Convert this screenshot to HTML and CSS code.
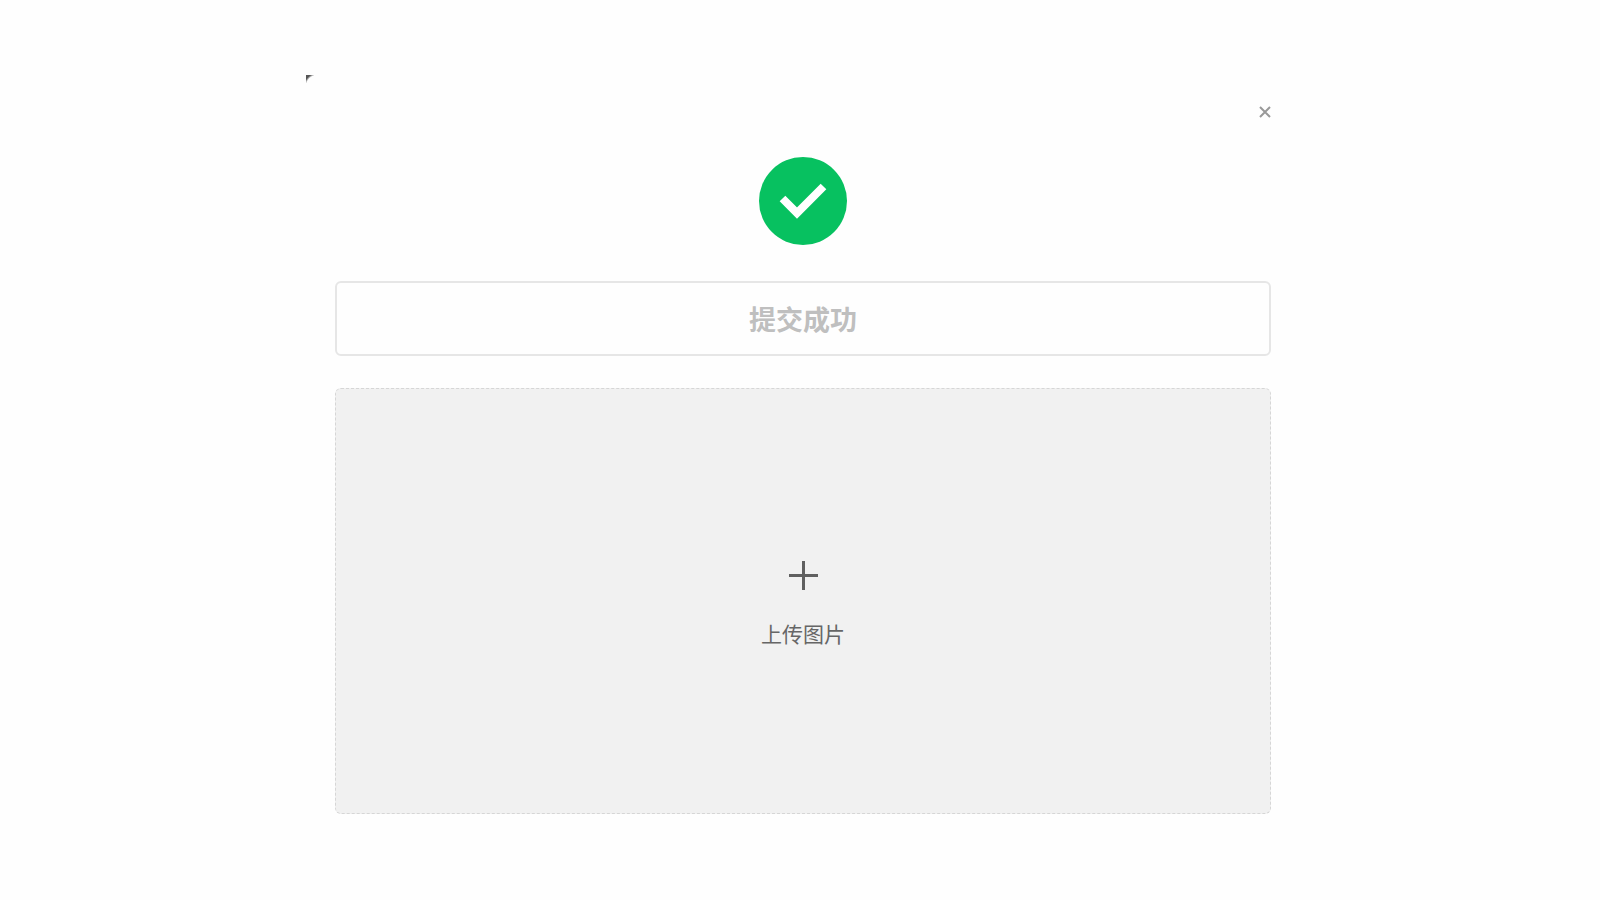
FILE: index.html
```html
<!DOCTYPE html>
<html lang="zh-CN">
<head>
    <meta charset="UTF-8">
    <meta name="viewport" content="width=device-width, initial-scale=1.0">
    <title>提交成功</title>
    <link rel="stylesheet" href="styles.css">
</head>
<body>
    <div class="backdrop">
        <div class="dialog">
            <div class="dialog-header">
                <button class="close-btn" type="button" aria-label="关闭">
                    <svg viewBox="0 0 12 12" width="12" height="12">
                        <path d="M1 1l10 10M11 1L1 11" />
                    </svg>
                </button>
            </div>

            <svg class="success-icon" viewBox="0 0 88 88">
                <circle cx="44" cy="44" r="44" />
                <path d="M23.5 41.5L38 56L64.5 29.5" />
            </svg>

            <button class="submit-btn" type="button" disabled>提交成功</button>

            <label class="upload">
                <input class="upload-input" type="file" accept="image/*">
                <svg class="upload-icon" viewBox="0 0 29 29">
                    <path d="M14.5 0v29M0 14.5h29" />
                </svg>
                <span class="upload-text">上传图片</span>
            </label>
        </div>
    </div>
</body>
</html>
```

FILE: styles.css
```css
:root {
    --success: #07c160;
    --border: #e6e6e6;
    --dash: #d6d6d6;
    --muted: #bfbfbf;
    --text: #666;
}

* {
    margin: 0;
    padding: 0;
    box-sizing: border-box;
    font-family: "Noto Sans CJK SC", sans-serif;
}

body {
    min-height: 100vh;
    background: #fefefe;
    color: var(--text);
}

.backdrop {
    display: flex;
    justify-content: center;
    padding: 75px 20px 0;
}

.dialog {
    display: flex;
    flex-direction: column;
    align-items: center;
    width: 100%;
    max-width: 988px;
    padding: 31px 23px 30px 29px;
    /* dark corner left outside the rounded edge */
    background: radial-gradient(circle at 12px 12px, #fefefe 12px, #555 14px) 0 0 / 8px 8px no-repeat;
}

.dialog-header {
    display: flex;
    justify-content: flex-end;
    width: 100%;
    height: 51px;
}

.close-btn {
    display: flex;
    width: 12px;
    height: 12px;
    align-items: center;
    border: none;
    background: none;
    cursor: pointer;
}

.close-btn path {
    fill: none;
    stroke: #999;
    stroke-width: 2;
}

.success-icon {
    width: 88px;
    height: 88px;
    margin-bottom: 36px;
}

.success-icon circle {
    fill: var(--success);
}

.success-icon path {
    fill: none;
    stroke: #fff;
    stroke-width: 8;
}

.submit-btn {
    width: 100%;
    height: 75px;
    margin-bottom: 32px;
    border: 2px solid var(--border);
    border-radius: 6px;
    background: #fefefe;
    color: var(--muted);
    font-size: 27px;
    font-weight: 700;
}

.upload {
    position: relative;
    display: flex;
    flex-direction: column;
    align-items: center;
    justify-content: center;
    gap: 27px;
    width: 100%;
    height: 426px;
    padding-top: 7px;
    border: 1px dashed var(--dash);
    border-radius: 6px;
    background: #f1f1f1;
    cursor: pointer;
}

.upload-input {
    position: absolute;
    inset: 0;
    opacity: 0;
    cursor: pointer;
}

.upload-icon {
    width: 29px;
    height: 29px;
}

.upload-icon path {
    fill: none;
    stroke: #606060;
    stroke-width: 3;
}

.upload-text {
    font-size: 21px;
    line-height: 32px;
}
```
